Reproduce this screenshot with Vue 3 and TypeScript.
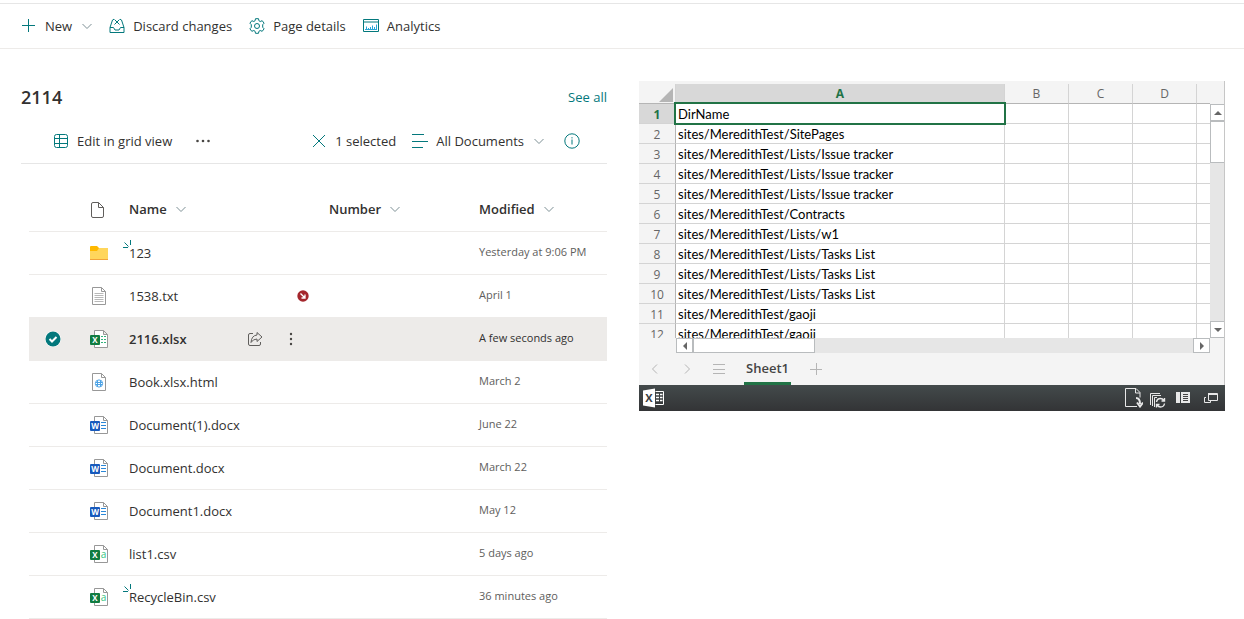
<script setup lang="ts">
import { ref } from 'vue'

type FileKind = 'folder' | 'txt' | 'xlsx' | 'html' | 'docx' | 'csv'

interface FileRow {
  name: string
  kind: FileKind
  modified: string
  isNew?: boolean
  blocked?: boolean
}

const files: FileRow[] = [
  { name: '123', kind: 'folder', modified: 'Yesterday at 9:06 PM', isNew: true },
  { name: '1538.txt', kind: 'txt', modified: 'April 1', blocked: true },
  { name: '2116.xlsx', kind: 'xlsx', modified: 'A few seconds ago' },
  { name: 'Book.xlsx.html', kind: 'html', modified: 'March 2' },
  { name: 'Document(1).docx', kind: 'docx', modified: 'June 22' },
  { name: 'Document.docx', kind: 'docx', modified: 'March 22' },
  { name: 'Document1.docx', kind: 'docx', modified: 'May 12' },
  { name: 'list1.csv', kind: 'csv', modified: '5 days ago' },
  { name: 'RecycleBin.csv', kind: 'csv', modified: '36 minutes ago', isNew: true },
]

const selected = ref('2116.xlsx')

const columns = ['A', 'B', 'C', 'D', '']
const cells: string[] = [
  'DirName',
  'sites/MeredithTest/SitePages',
  'sites/MeredithTest/Lists/Issue tracker',
  'sites/MeredithTest/Lists/Issue tracker',
  'sites/MeredithTest/Lists/Issue tracker',
  'sites/MeredithTest/Contracts',
  'sites/MeredithTest/Lists/w1',
  'sites/MeredithTest/Lists/Tasks List',
  'sites/MeredithTest/Lists/Tasks List',
  'sites/MeredithTest/Lists/Tasks List',
  'sites/MeredithTest/gaoji',
  'sites/MeredithTest/gaoji',
]
</script>

<template>
  <div class="page">
    <nav class="topbar" aria-label="Page commands">
      <button class="cmd">
        <svg class="icon teal" viewBox="0 0 16 16"><path d="M7.500 1v13M1 7.500h13" /></svg>
        <span>New</span>
        <svg class="chev" viewBox="0 0 10 10"><path d="M.5 3 5 7.500 9.500 3" /></svg>
      </button>
      <button class="cmd">
        <svg class="icon teal" viewBox="0 0 16 16"><path d="M1 9.500h3.500l1.500 2.500h4l1.500-2.500H15V14.500H1zM1 9.500 3.500 2l1.500-.8M15 9.500 12.500 2 11 1.200M5.500 1.500l5 5M10.500 1.500l-5 5" /></svg>
        <span>Discard changes</span>
      </button>
      <button class="cmd">
        <svg class="icon teal" viewBox="0 0 16 16"><path d="M6.500.7h3l.4 2 1.300.8 2-.8 1.900 2.500-1.400 1.500v2.600l1.400 1.500-1.900 2.500-2-.8-1.300.8-.4 2h-3l-.4-2-1.300-.8-2 .8L.9 10.800l1.400-1.500V6.700L.9 5.200l1.900-2.500 2 .8 1.300-.8z" /><circle cx="8" cy="8" r="2.500" /></svg>
        <span>Page details</span>
      </button>
      <button class="cmd">
        <svg class="icon teal" viewBox="0 0 16 16"><path d="M.5 1.500h15v12H.5zM.5 4h15" /><path class="sky" d="M3.500 12V8.500M5.500 12v-2M7.500 12V9M9.500 12V7.500M11.500 12V9M13.500 12V6.500M2 11.500h12" /></svg>
        <span>Analytics</span>
      </button>
    </nav>

    <main class="parts">
      <section class="library">
        <header class="lib-head">
          <h2>2114</h2>
          <a href="#">See all</a>
        </header>

        <div class="lib-bar">
          <button class="cmd">
            <svg class="icon teal" viewBox="0 0 16 16"><rect x="1.500" y="1.500" width="13" height="13" rx="2" /><path d="M1.500 5.500h13M1.500 10.500h13M6.500 1.500v13" /></svg>
            <span>Edit in grid view</span>
          </button>
          <button class="cmd more" aria-label="More">
            <svg class="icon" viewBox="0 0 16 16"><g class="dots"><circle cx="2.500" cy="8" r="1.300" /><circle cx="8" cy="8" r="1.300" /><circle cx="13.500" cy="8" r="1.300" /></g></svg>
          </button>
          <div class="lib-right">
            <button class="cmd">
              <svg class="icon teal" viewBox="0 0 16 16"><path d="m2 2 12 12M14 2 2 14" /></svg>
              <span>1 selected</span>
            </button>
            <button class="cmd">
              <svg class="icon teal" viewBox="0 0 16 16"><path d="M0 1.500h12M0 8.500h16M0 14.500h11" /></svg>
              <span>All Documents</span>
              <svg class="chev" viewBox="0 0 10 10"><path d="M.5 3 5 7.500 9.500 3" /></svg>
            </button>
            <button class="cmd info" aria-label="Details">
              <svg class="icon teal" viewBox="0 0 16 16"><circle cx="8" cy="8" r="7.200" /><path d="M8 6.500v5M8 4.200v1.200" /></svg>
            </button>
          </div>
        </div>

        <table class="files">
          <colgroup>
            <col class="c-check" />
            <col class="c-icon" />
            <col class="c-name" />
            <col class="c-number" />
            <col />
          </colgroup>
          <thead>
            <tr>
              <th></th>
              <th class="center" aria-label="Type">
                <svg class="icon" viewBox="0 0 16 16"><path d="M.5 2Q.5.500 2 .5h5.500l5 5V14q0 1.500-1.500 1.500H2Q.5 15.500.5 14zM7.500.5v5h5" /></svg>
              </th>
              <th v-for="h in ['Name', 'Number', 'Modified']" :key="h">
                <button class="sort">{{ h }}<svg class="chev" viewBox="0 0 10 10"><path d="M.5 3 5 7.500 9.500 3" /></svg></button>
              </th>
            </tr>
          </thead>
          <tbody>
            <tr v-for="f in files" :key="f.name" :class="{ selected: selected === f.name }" @click="selected = f.name">
              <td class="center">
                <svg v-if="selected === f.name" class="check" viewBox="0 0 16 16" role="img" aria-label="Selected"><circle cx="8" cy="8" r="8" fill="#fff" /><circle cx="8" cy="8" r="7.500" fill="#03787c" /><path d="m4.500 8 2.500 2.500 4.500-4.500" fill="none" stroke="#fff" stroke-width="2" /></svg>
              </td>
              <td class="center">
                <svg v-if="f.kind === 'folder'" class="ficon" viewBox="0 0 20 20"><path d="M1 4q0-1 1-1h6l2 2v5H1z" fill="#ffb900" /><path d="M1 8h7l2-3h9v11H1z" fill="#ffd65c" /><path d="M1 16h18v1H1z" fill="#f2a33a" /></svg>
                <svg v-else class="ficon" viewBox="0 0 20 20">
                  <template v-if="f.kind === 'txt' || f.kind === 'html'">
                    <path d="M3.500 1.500h9l4 4v13h-13zM12.500 1.500v4h4" fill="#fff" stroke="#989898" />
                    <path v-if="f.kind === 'txt'" d="M5.500 7.500h9M5.500 9.500h9M5.500 11.500h9M5.500 13.500h9M5.500 15.500h9" stroke="#b8b8b8" />
                    <g v-else fill="none" stroke="#4da3e6"><circle cx="10" cy="11.500" r="3.600" /><path d="M6.500 10.500h7M6.500 12.500h7M8.500 8.500v6M11.500 8.500v6" /></g>
                  </template>
                  <template v-else>
                    <path d="M5.500 1.500h9l4 4v13h-13zM14.500 1.500v4h4" fill="#fff" stroke="#989898" />
                    <path v-if="f.kind === 'docx'" d="M12 7.500h5M12 10.500h5M12 13.500h5" stroke="#2b88d8" />
                    <path v-if="f.kind === 'xlsx'" d="M12 7.500h2M15 7.500h2M12 10.500h2M15 10.500h2M12 13.500h2M15 13.500h2" stroke="#33b27b" />
                    <text v-if="f.kind === 'csv'" x="14.500" y="14" font-size="10" text-anchor="middle" fill="#33c481">a</text>
                    <rect x="1" y="6" width="10" height="10" rx="1" :fill="f.kind === 'docx' ? '#185abd' : '#107c41'" />
                    <text x="6" y="14" font-size="8" font-weight="700" text-anchor="middle" fill="#fff">{{ f.kind === 'docx' ? 'W' : 'X' }}</text>
                  </template>
                </svg>
              </td>
              <td class="name">
                <div class="name-line">
                  <a href="#" @click.prevent>{{ f.name }}</a>
                  <svg v-if="f.isNew" class="spark" viewBox="0 0 9 9"><path d="M0 7.500h5M1.500 2.500l4 4M7.500 0v5" /></svg>
                  <span v-if="selected === f.name" class="actions">
                    <button aria-label="Share"><svg class="icon" viewBox="0 0 16 16"><path d="M6 2.500H3Q1.500 2.500 1.500 4v9q0 1.500 1.500 1.500h9q1.500 0 1.500-1.500v-2M10 1.500l5 4.500-5 4.500V8Q6 8 4 11.500 4.500 4.500 10 4z" /></svg></button>
                    <button aria-label="More actions"><svg class="icon" viewBox="0 0 16 16"><g class="dots"><circle cx="8" cy="3" r="1.200" /><circle cx="8" cy="8" r="1.200" /><circle cx="8" cy="13" r="1.200" /></g></svg></button>
                  </span>
                  <svg v-if="f.blocked" class="blocked" viewBox="0 0 12 12"><circle cx="6" cy="6" r="5.700" fill="#a4262c" /><path d="m3.500 3.500 4 4M8 4.500V8H4.500" fill="none" stroke="#fff" stroke-width="1.300" /></svg>
                </div>
              </td>
              <td></td>
              <td class="modified">{{ f.modified }}</td>
            </tr>
          </tbody>
        </table>
      </section>

      <section class="workbook" aria-label="Workbook">
        <div class="sheet-area">
          <div class="grid-view">
            <table class="sheet">
              <colgroup>
                <col class="s-row" />
                <col />
                <col class="s-col" />
                <col class="s-col" />
                <col class="s-col" />
                <col class="s-end" />
              </colgroup>
              <thead>
                <tr>
                  <th class="corner"><svg viewBox="0 0 14 14"><path d="M14 0v14H0z" fill="#b5b5b5" /></svg></th>
                  <th v-for="c in columns" :key="c" :class="{ active: c === 'A' }">{{ c }}</th>
                </tr>
              </thead>
              <tbody>
                <tr v-for="(text, i) in cells" :key="i">
                  <th :class="{ active: i === 0 }">{{ i + 1 }}</th>
                  <td :class="{ cursor: i === 0 }">{{ text }}</td>
                  <td></td>
                  <td></td>
                  <td></td>
                  <td></td>
                </tr>
              </tbody>
            </table>
          </div>
          <div class="vscroll">
            <button class="sb" aria-label="Scroll up"><svg viewBox="0 0 8 8"><path d="M0 6h8L4 2z" /></svg></button>
            <div class="thumb-v"></div>
            <div class="track"></div>
            <button class="sb" aria-label="Scroll down"><svg viewBox="0 0 8 8"><path d="M0 2h8L4 6z" /></svg></button>
          </div>
        </div>
        <div class="hscroll">
          <button class="sb" aria-label="Scroll left"><svg viewBox="0 0 8 8"><path d="M6 0v8L2 4z" /></svg></button>
          <div class="thumb-h"></div>
          <div class="track"></div>
          <button class="sb" aria-label="Scroll right"><svg viewBox="0 0 8 8"><path d="M2 0v8l4-4z" /></svg></button>
        </div>
        <div class="tabs">
          <button class="tab-btn" aria-label="Previous sheet"><svg viewBox="0 0 12 12"><path d="M8 1.500 3.500 6 8 10.500" /></svg></button>
          <button class="tab-btn" aria-label="Next sheet"><svg viewBox="0 0 12 12"><path d="M4 1.500 8.500 6 4 10.500" /></svg></button>
          <button class="tab-btn" aria-label="All sheets"><svg viewBox="0 0 12 12"><path d="M0 1.500h12M0 6.500h12M0 10.500h12" /></svg></button>
          <button class="tab">Sheet1</button>
          <button class="tab-btn" aria-label="New sheet"><svg viewBox="0 0 12 12"><path d="M6.500 0v12M0 6.500h12" /></svg></button>
        </div>
        <footer class="status">
          <svg class="xl" viewBox="0 0 22 20"><path d="M12.500 3.500h8v13h-8" fill="none" stroke="#fff" /><path d="M13 6.500h3M17 6.500h2.500M13 9.500h3M17 9.500h2.500M13 12.500h3M17 12.500h2.500" stroke="#fff" stroke-width="1.500" /><path d="M0 2.500 12 .5v19l-12-2z" fill="#fff" /><text x="6" y="14" font-size="11" font-weight="700" text-anchor="middle" fill="#3a3d3f">X</text></svg>
          <div class="status-right">
            <button aria-label="Download"><svg viewBox="-1 0 20 20"><path d="M13 18.500H1.500v-18H12l4 4v5M11.500.5V5H16" /><path d="M12 10q4 0 4 6M13 14.500l3 4 3-4" stroke-width="2" /></svg></button>
            <button aria-label="Refresh"><svg viewBox="2 -1 20 20"><path d="M3.500 16V4.500H13M5.500 17V6.500H14M7.500 18V8.500H10" /><path d="M9.500 13q.5-3.500 4-3.500 2 0 3.500 2M17.500 9v3h-3M17.500 14.500q-.5 3.500-4 3.500-2 0-3.500-2M9.500 18.500v-3h3" stroke-width="1.400" /></svg></button>
            <button aria-label="Panel"><svg viewBox="2 0 20 20"><path d="M3 4h4v11H3zM8 4h9v11H8z" fill="#e8e8e8" stroke="none" /><path d="M10 6.500h5M10 8.500h5M10 10.500h5M10 12.500h5" stroke="#444" /></svg></button>
            <button aria-label="Open in full size"><svg viewBox="0 0 20 20"><path d="M7 5.500h9.500v7H7.500v-7M7 6.500h9" /><path d="M5 9.500H3.500v5h6V13" /></svg></button>
          </div>
        </footer>
      </section>
    </main>
  </div>
</template>

<style>
body {
  margin: 0;
  background: #fff;
}
</style>

<style scoped>
.page {
  padding-top: 3px;
  font-family: "Open Sans", "Noto Sans", sans-serif;
  font-size: 13px;
  line-height: 20px;
  color: #323130;
}
button {
  border: 0;
  padding: 0;
  margin: 0;
  background: none;
  font: inherit;
  color: inherit;
  cursor: pointer;
}
a {
  color: inherit;
  text-decoration: none;
}
svg {
  display: block;
  flex: none;
}
.icon {
  width: 16px;
  height: 16px;
  fill: none;
  stroke: #605e5c;
}
.icon.teal {
  stroke: #03787c;
}
.icon .sky {
  stroke: #2ba5d6;
}
.icon .dots {
  fill: #484644;
  stroke: none;
}
.chev {
  width: 10px;
  height: 10px;
  fill: none;
  stroke: #7d8f94;
}
.topbar {
  display: flex;
  gap: 17px;
  height: 44px;
  padding: 0 21px;
  border-top: 1px solid #e6e6e6;
  border-bottom: 1px solid #edebe9;
}
.cmd {
  display: flex;
  align-items: center;
  gap: 8px;
  white-space: nowrap;
}
.cmd .chev {
  margin-left: 2px;
}
.parts {
  display: grid;
  grid-template-columns: minmax(0, 1fr) minmax(0, 1fr);
  align-items: start;
  gap: 32px;
  padding: 32px 19px 0 21px;
}
.lib-head {
  display: flex;
  align-items: center;
  justify-content: space-between;
  height: 32px;
}
.lib-head h2 {
  margin: 0;
  font-size: 18px;
  font-weight: 600;
}
.lib-head a {
  color: #03787c;
}
.lib-bar {
  display: flex;
  height: 44px;
  margin-top: 6px;
  padding: 0 27px 0 32px;
  border-bottom: 1px solid #e6e6e6;
}
.more {
  margin-left: 23px;
}
.lib-right {
  display: flex;
  gap: 16px;
  margin-left: auto;
}
.info {
  margin-left: 4px;
}
.files {
  width: calc(100% - 8px);
  margin: 24px 0 0 8px;
  table-layout: fixed;
  border-collapse: separate;
  border-spacing: 0;
}
.c-check {
  width: 48px;
}
.c-icon {
  width: 44px;
}
.c-name {
  width: 200px;
}
.c-number {
  width: 150px;
}
.files th,
.files td {
  box-sizing: border-box;
  height: 43px;
  padding: 0 8px;
  border-bottom: 1px solid #edebe9;
  text-align: left;
  white-space: nowrap;
}
.files thead th {
  height: 44px;
  padding-bottom: 2px;
}
.files .center {
  padding: 0;
}
.center svg {
  margin: 0 auto;
}
.files .name {
  padding-right: 12px;
}
.sort {
  display: flex;
  align-items: center;
  gap: 9px;
  font-weight: 600;
}
.ficon {
  width: 20px;
  height: 20px;
}
.check {
  width: 16px;
  height: 16px;
}
.name-line {
  position: relative;
  display: flex;
  align-items: center;
  justify-content: space-between;
}
.spark {
  position: absolute;
  left: -6px;
  top: -3px;
  width: 9px;
  height: 9px;
  fill: none;
  stroke: #03787c;
}
.actions {
  display: flex;
}
.actions button {
  display: grid;
  place-items: center;
  width: 36px;
  height: 32px;
}
.blocked {
  width: 12px;
  height: 12px;
}
.files .modified {
  padding-right: 0;
  padding-bottom: 2px;
  font-size: 11px;
  color: #605e5c;
}
.selected td {
  background: #edebe9;
}
.selected a {
  font-weight: 600;
}
.files .selected .modified {
  color: #323130;
}
.workbook {
  background: #f4f4f4;
}
.sheet-area {
  display: flex;
  height: 257px;
  border-right: 1px solid #c6c6c6;
}
.grid-view {
  flex: 1;
  min-width: 0;
  padding-top: 3px;
  overflow: hidden;
}
.sheet {
  width: 100%;
  table-layout: fixed;
  border-collapse: separate;
  border-spacing: 0;
}
.s-row {
  width: 37px;
}
.s-col {
  width: 64px;
}
.s-end {
  width: 13px;
}
.sheet th,
.sheet td {
  box-sizing: border-box;
  height: 20px;
  padding: 2px 0 0;
  border-right: 1px solid #d4d4d4;
  border-bottom: 1px solid #d4d4d4;
  line-height: 17px;
  white-space: nowrap;
}
.sheet th {
  background: #f4f4f4;
  font-size: 12px;
  font-weight: 400;
  color: #666;
}
.sheet thead th {
  padding: 0;
  border-bottom-color: #b5b5b5;
}
.sheet tbody th {
  border-right-color: #b5b5b5;
}
.sheet th.active {
  background: #d8d8d8;
  font-weight: 700;
  color: #217346;
}
.sheet td {
  padding-left: 2px;
  background: #fff;
  font-family: Lato, "Open Sans", sans-serif;
  font-size: 13px;
  color: #000;
}
.sheet tr > :last-child {
  border-right: 0;
}
.corner svg {
  width: 14px;
  height: 14px;
  margin: 3px 2px 0 auto;
}
.sheet .cursor {
  position: relative;
  z-index: 1;
}
.sheet .cursor::after {
  content: "";
  position: absolute;
  inset: -2px;
  border: 2px solid #217346;
}
.vscroll {
  display: flex;
  flex-direction: column;
  width: 14px;
  padding-top: 23px;
}
.sb {
  display: grid;
  place-items: center;
  flex: none;
  box-sizing: border-box;
  border: 1px solid #b9bcbe;
  background: #fff;
}
.sb svg {
  width: 8px;
  height: 8px;
  fill: #666;
}
.vscroll .sb {
  height: 17px;
  border-right: 0;
}
.hscroll .sb {
  width: 17px;
}
.thumb-v {
  box-sizing: border-box;
  height: 42px;
  border: 1px solid #b9bcbe;
  border-right: 0;
  background: #fff;
}
.track {
  flex: 1;
  background: #e6e6e6;
}
.hscroll {
  display: flex;
  height: 15px;
  padding: 0 14px 0 37px;
  border-right: 1px solid #c6c6c6;
}
.thumb-h {
  box-sizing: border-box;
  width: 122px;
  border: 1px solid #b9bcbe;
  background: #fff;
}
.tabs {
  display: flex;
  align-items: stretch;
  height: 32px;
  border-right: 1px solid #c6c6c6;
}
.tab-btn {
  display: grid;
  place-items: center;
  width: 32px;
}
.tab-btn svg {
  width: 12px;
  height: 12px;
  fill: none;
  stroke: #b5b5b5;
}
.tab {
  box-sizing: border-box;
  margin: 0 9px;
  padding: 0 2px;
  border-bottom: 3px solid #217346;
  font-weight: 600;
  color: #444;
}
.status {
  display: flex;
  align-items: center;
  justify-content: space-between;
  height: 26px;
  padding: 0 4px;
  background: linear-gradient(#434a4b, #333436);
}
.xl {
  width: 22px;
  height: 20px;
}
.status-right {
  display: flex;
  gap: 6px;
}
.status-right svg {
  width: 20px;
  height: 20px;
  fill: none;
  stroke: #e8e8e8;
}
</style>
